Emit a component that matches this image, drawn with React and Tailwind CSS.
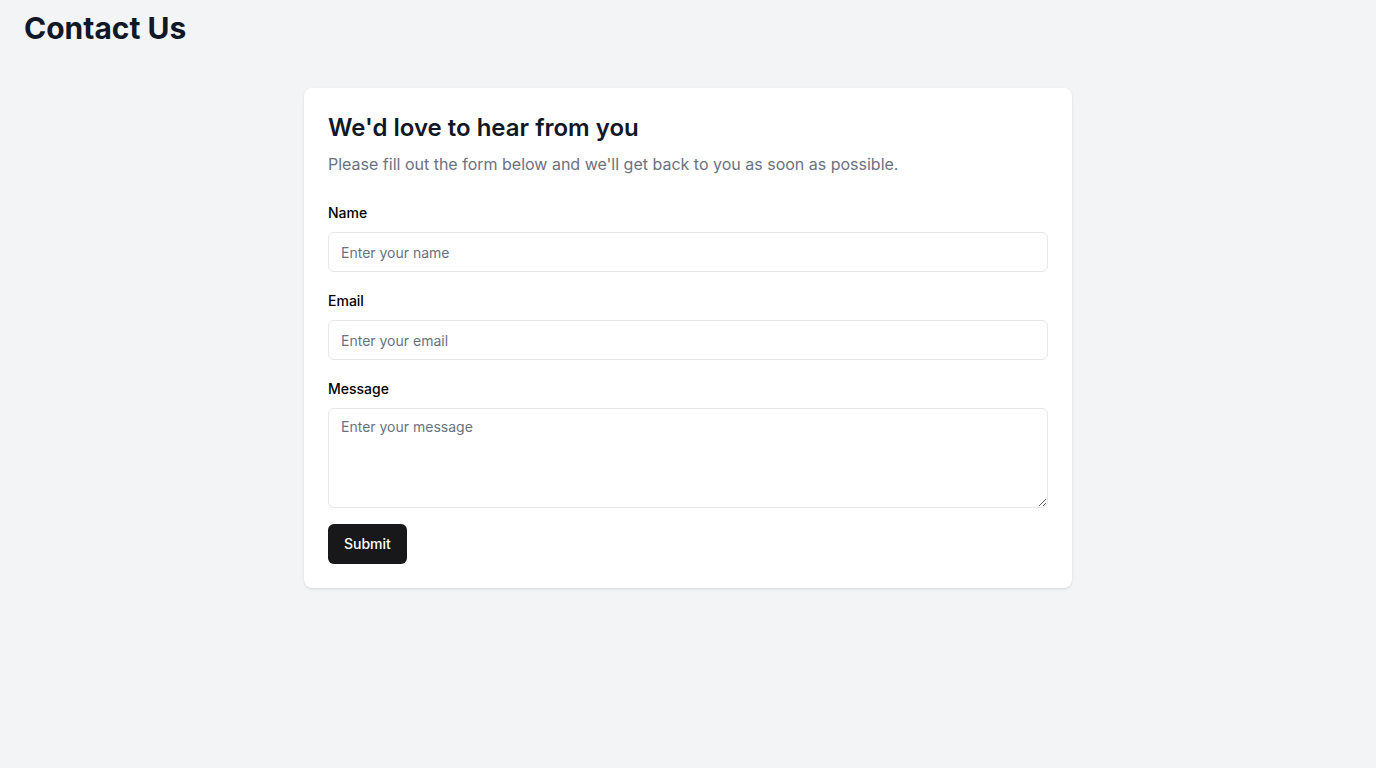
export default function App() {
  return (
    <div className="min-h-screen bg-gray-100 font-['Inter',sans-serif]">
      <div className="px-6 pt-[10px]">
        <h1 className="text-3xl font-bold text-gray-900">Contact Us</h1>
      </div>

      {/* Form card */}
      <div className="max-w-3xl mx-auto mt-[42px] bg-white rounded-lg shadow-sm p-6">
        <h2 className="text-2xl font-semibold text-gray-900">We'd love to hear from you</h2>
        <p className="text-base text-gray-500 mt-2">
          Please fill out the form below and we'll get back to you as soon as possible.
        </p>

        <form className="mt-[27px]" onSubmit={e => e.preventDefault()}>
          <div className="mb-[19px]">
            <label className="block text-sm font-medium text-black mb-[9px]">Name</label>
            <input
              type="text"
              placeholder="Enter your name"
              className="w-full h-10 px-3 text-sm border border-gray-200 rounded-md placeholder:text-gray-500 outline-none"
            />
          </div>
          <div className="mb-[19px]">
            <label className="block text-sm font-medium text-black mb-[9px]">Email</label>
            <input
              type="email"
              placeholder="Enter your email"
              className="w-full h-10 px-3 text-sm border border-gray-200 rounded-md placeholder:text-gray-500 outline-none"
            />
          </div>
          <div className="mb-4">
            <label className="block text-sm font-medium text-black mb-[9px]">Message</label>
            <textarea
              placeholder="Enter your message"
              className="block w-full h-[100px] px-3 py-2 text-sm border border-gray-200 rounded-md placeholder:text-gray-500 outline-none"
            />
          </div>
          <button
            type="submit"
            className="h-10 px-4 bg-zinc-900 text-white text-sm font-medium rounded-md"
          >
            Submit
          </button>
        </form>
      </div>
    </div>
  )
}
